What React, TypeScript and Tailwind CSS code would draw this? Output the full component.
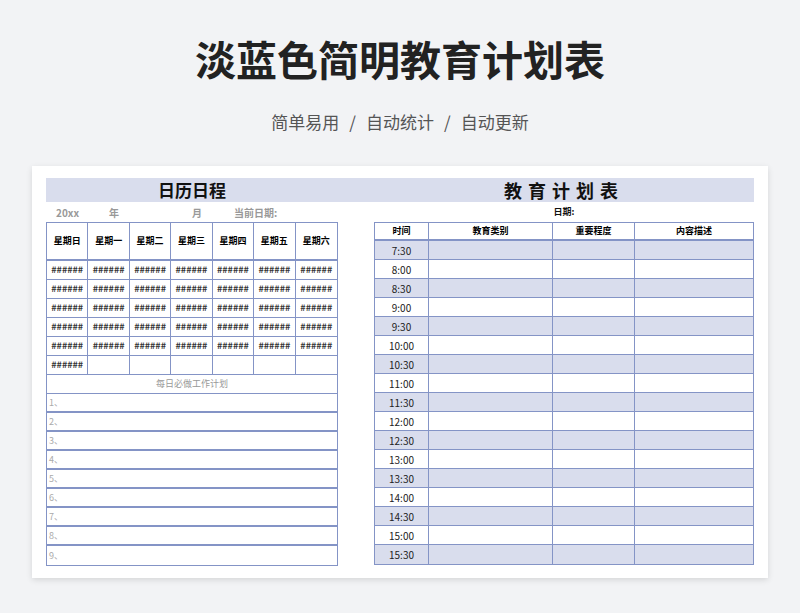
const F = { fontFamily: '"Noto Sans CJK SC","Noto Sans",sans-serif' };
const days = ["星期日","星期一","星期二","星期三","星期四","星期五","星期六"];
const times = ["7:30","8:00","8:30","9:00","9:30","10:00","10:30","11:00","11:30","12:00","12:30","13:00","13:30","14:00","14:30","15:00","15:30"];
const B = "border-[#8494c6]";

export default function App() {
  return (
    <div style={F} className="w-[800px] h-[613px] bg-[#f2f3f5] flex flex-col items-center overflow-hidden">
      <div className="mt-[30px] text-[41px] leading-[56px] font-bold text-[#222]">淡蓝色简明教育计划表</div>
      <div className="mt-[24px] text-[17px] leading-[24px] text-[#555] flex gap-[10px]"><span>简单易用</span><span>/</span><span>自动统计</span><span>/</span><span>自动更新</span></div>
      <div className="mt-[32px] w-[736px] h-[412px] bg-white shadow-[0_2px_6px_rgba(0,0,0,0.12)] px-[14px] pt-[12px]">
        <div className="h-[24px] bg-[#d9dded] flex items-center">
          <div className="w-[292px] text-center text-[17px] font-bold text-[#111]">日历日程</div>
          <div className="flex-1 ml-[36px] text-center text-[18px] font-bold tracking-[6px] text-[#111]">教育计划表</div>
        </div>
        <div className="flex gap-[36px]">
          <div className="w-[292px]">
            <div className="h-[20px] flex items-center text-[10px] font-bold text-[#999]">
              <span className="ml-[10px]">20xx</span><span className="ml-[30px]">年</span><span className="ml-[73px]">月</span><span className="ml-[32px]">当前日期:</span>
            </div>
            <div className={`border ${B}`}>
              <div className={`grid grid-cols-7 h-[38px] border-b-2 ${B}`}>
                {days.map((d,i)=>(<div key={d} className={`flex items-center justify-center text-[9px] font-bold ${i<6?"border-r "+B:""}`}>{d}</div>))}
              </div>
              {[0,1,2,3,4,5].map(r=>(
                <div key={r} className={`grid grid-cols-7 h-[19px] border-b ${B}`}>
                  {days.map((d,i)=>(<div key={d} className={`flex items-center justify-center text-[9px] font-semibold text-[#333] ${i<6?"border-r "+B:""}`}>{r<5||i===0?"######":""}</div>))}
                </div>
              ))}
              <div className={`h-[19px] border-b ${B} flex items-center justify-center text-[9px] text-[#999]`}>每日必做工作计划</div>
              {[1,2,3,4,5,6,7,8,9].map(n=>(
                <div key={n} className={`h-[19px] ${n<9?"border-b-2 "+B:""} flex items-center pl-[2px] text-[9px] text-[#aaa]`}>{n}、</div>
              ))}
            </div>
          </div>
          <div className="flex-1">
            <div className="h-[20px] flex items-center justify-center text-[9px] font-bold text-[#111]">日期:</div>
            <div className={`border ${B}`}>
              <div className={`flex h-[18px] border-b-2 ${B} text-[9px] font-bold`}>
                <div className={`w-[54px] border-r ${B} flex items-center justify-center`}>时间</div>
                <div className={`w-[124px] border-r ${B} flex items-center justify-center`}>教育类别</div>
                <div className={`w-[82px] border-r ${B} flex items-center justify-center`}>重要程度</div>
                <div className="flex-1 flex items-center justify-center">内容描述</div>
              </div>
              {times.map((t,i)=>(
                <div key={t} className={`flex h-[19px] ${i<16?"border-b "+B:""} ${i%2===0?"bg-[#d9dded]":"bg-white"} text-[10px] text-[#222]`}>
                  <div className={`w-[54px] border-r ${B} flex items-center justify-center`}>{t}</div>
                  <div className={`w-[124px] border-r ${B}`}></div>
                  <div className={`w-[82px] border-r ${B}`}></div>
                  <div className="flex-1"></div>
                </div>
              ))}
            </div>
          </div>
        </div>
      </div>
    </div>
  );
}
